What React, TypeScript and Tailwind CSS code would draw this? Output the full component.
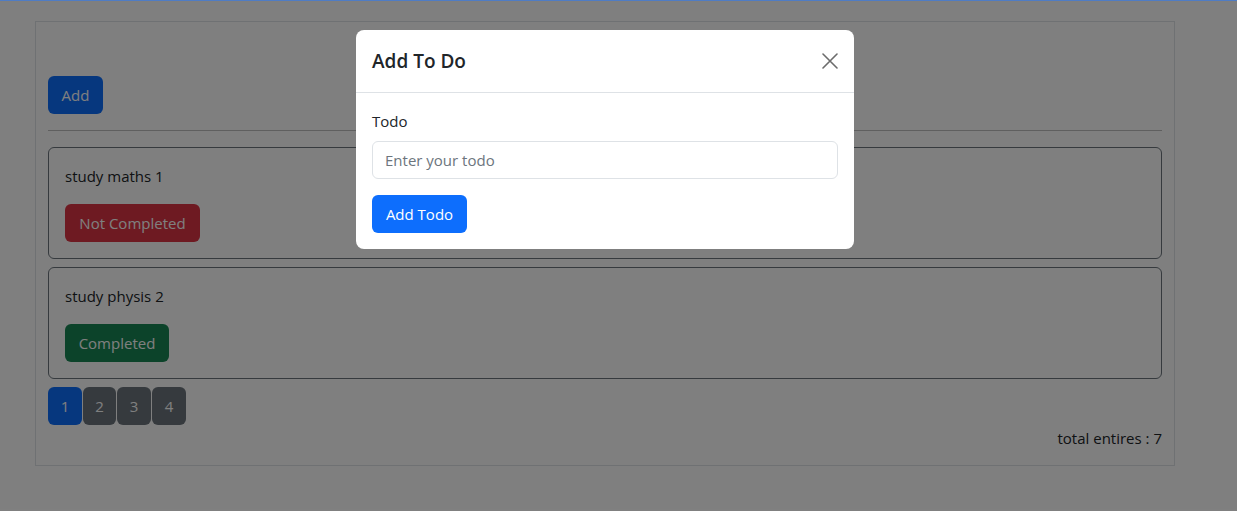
import React from "react";

const font = { fontFamily: '"Open Sans", "Noto Sans", sans-serif' };

function Card({ title, done }: { title: string; done: boolean }) {
  return (
    <div className="mt-2 first:mt-0 rounded-[6px] border border-[#6c757d] p-4 h-[112px]">
      <p className="text-[15px] leading-6 h-6 mb-4 text-[#212529]">{title}</p>
      <button
        className={`h-[38px] rounded-[6px] text-[15px] text-white ${done ? "bg-[#198754] w-[104px]" : "bg-[#dc3545] w-[135px]"}`}
      >
        {done ? "Completed" : "Not Completed"}
      </button>
    </div>
  );
}

export default function App() {
  return (
    <div className="relative w-[1237px] h-[511px] bg-white overflow-hidden" style={font}>
      <div className="pt-[21px] pl-[35px]">
        <div className="w-[1140px] h-[445px] border border-[#dee2e6] px-3 pt-[54px]">
          <button className="h-[38px] w-[55px] rounded-[6px] bg-[#0d6efd] text-white text-[15px]">Add</button>
          <div className="mt-4 mb-4 h-px bg-[#bfbfbf]" />
          <div className="flex flex-col">
            <Card title="study maths 1" done={false} />
            <Card title="study physis 2" done={true} />
          </div>
          <div className="mt-2 flex gap-px">
            <button className="h-[38px] w-[34px] rounded-[6px] bg-[#0d6efd] text-white text-[15px]">1</button>
            <button className="h-[38px] w-[33px] rounded-[6px] bg-[#6c757d] text-white text-[15px]">2</button>
            <button className="h-[38px] w-[34px] rounded-[6px] bg-[#6c757d] text-white text-[15px]">3</button>
            <button className="h-[38px] w-[34px] rounded-[6px] bg-[#6c757d] text-white text-[15px]">4</button>
          </div>
          <div className="text-right text-[15px] leading-6 mt-[1px] text-[#212529]">total entires : 7</div>
        </div>
      </div>

      <div className="absolute inset-0 bg-black/50" />
      <div className="absolute left-0 top-0 w-full h-px bg-[#4f7cc4]" />

      <div className="absolute left-[356px] top-[30px] w-[498px] rounded-[8px] bg-white">
        <div className="h-[63px] border-b border-[#dee2e6] px-4 flex items-center justify-between">
          <h5 className="text-[19px] font-semibold text-[#212529]">Add To Do</h5>
          <svg width="16" height="16" viewBox="0 0 16 16">
            <path d="M1 1 L15 15 M15 1 L1 15" stroke="#6c6c6c" strokeWidth="1.6" strokeLinecap="round" />
          </svg>
        </div>
        <div className="p-4">
          <label className="block text-[15px] leading-6 mb-2 text-[#212529]">Todo</label>
          <input
            className="block w-full h-[38px] rounded-[6px] border border-[#dee2e6] px-3 text-[15px] placeholder:text-[#6c757d] outline-none"
            placeholder="Enter your todo"
            style={font}
          />
          <button className="mt-4 h-[38px] w-[95px] rounded-[6px] bg-[#0d6efd] text-white text-[15px]">Add Todo</button>
        </div>
      </div>
    </div>
  );
}
